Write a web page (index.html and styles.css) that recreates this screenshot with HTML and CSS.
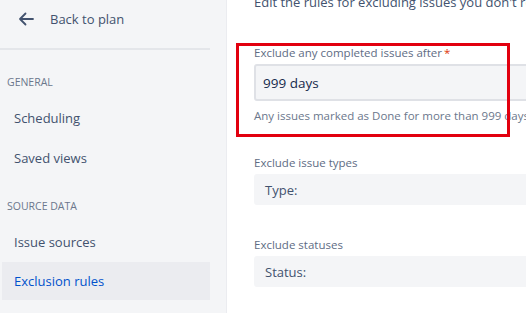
FILE: index.html
```html
<!DOCTYPE html>
<html>
<head>
<meta charset="utf-8">
<link rel="stylesheet" href="styles.css">
</head>
<body>
<div class="page">
  <aside class="sidebar">
    <div class="back">
      <svg class="back-icon" width="16" height="16" viewBox="0 0 16 16"><path d="M15 8H2M7.5 2.5L2 8l5.5 5.5" fill="none" stroke="#42526e" stroke-width="1.8" stroke-linecap="round" stroke-linejoin="round"/></svg>
      <span>Back to plan</span>
    </div>
    <div class="divider"></div>
    <div class="group-title">GENERAL</div>
    <div class="nav-item">Scheduling</div>
    <div class="nav-item">Saved views</div>
    <div class="group-title">SOURCE DATA</div>
    <div class="nav-item">Issue sources</div>
    <div class="nav-item selected">Exclusion rules</div>
  </aside>
  <main class="main">
    <p class="intro">Edit the rules for excluding issues you don't really want to include in your plan.</p>
    <div class="field first">
      <div class="label">Exclude any completed issues after<span class="req">*</span></div>
      <div class="input">999 days</div>
      <div class="help">Any issues marked as Done for more than 999 days will be excluded from your plan.</div>
    </div>
    <div class="field second">
      <div class="label">Exclude issue types</div>
      <div class="select">Type:</div>
    </div>
    <div class="field third">
      <div class="label">Exclude statuses</div>
      <div class="select">Status:</div>
    </div>
    <div class="highlight"></div>
  </main>
</div>
</body>
</html>
```
FILE: styles.css
```css
* { box-sizing: border-box; }
html, body { margin: 0; padding: 0; height: 100%; overflow: hidden; }
body {
  font-family: "Open Sans", "Noto Sans", sans-serif;
  background: #fff;
  color: #172b4d;
}
.page { display: flex; height: 313px; }
.sidebar {
  width: 227px;
  flex: none;
  background: #f4f5f7;
  border-right: 1px solid #ebecf0;
  padding-right: 16px;
}
.back {
  height: 38px;
  display: flex;
  align-items: center;
  padding-left: 18px;
  gap: 16px;
  font-size: 13px;
  color: #42526e;
}
.back-icon { display: block; }
.divider { height: 2px; background: #e4e6ea; margin-top: 10px; }
.group-title {
  font-size: 10.5px;
  line-height: 16px;
  height: 16px;
  color: #6b778c;
  padding-left: 7px;
  margin: 20px 0 8px;
}
.divider + .group-title { margin-top: 24px; }
.nav-item {
  height: 40px;
  display: flex;
  align-items: center;
  padding-left: 14px;
  font-size: 13px;
  color: #42526e;
}
.nav-item.selected {
  height: 38px;
  margin-left: 2px;
  padding-left: 12px;
  background: #ebecf0;
  color: #0052cc;
}
.main {
  flex: 1;
  position: relative;
  padding-left: 27px;
  min-width: 0;
}
.intro {
  margin: -8px 0 0;
  font-size: 13px;
  line-height: 20px;
  color: #42526e;
  white-space: nowrap;
}
.field.first { margin-top: 33px; }
.field.second { margin-top: 31px; }
.field.third { margin-top: 32px; }
.label {
  font-size: 11.5px;
  line-height: 16px;
  color: #5e6c84;
  white-space: nowrap;
}
.req { color: #de350b; margin-left: 2px; }
.input {
  margin-top: 3px;
  height: 37px;
  width: 400px;
  background: #f4f5f7;
  border: 2px solid #dfe1e6;
  border-radius: 3px;
  padding-left: 7px;
  display: flex;
  align-items: center;
  font-size: 13.5px;
  color: #172b4d;
}
.help {
  margin-top: 7px;
  font-size: 11.5px;
  line-height: 16px;
  color: #6b778c;
  white-space: nowrap;
}
.select {
  margin-top: 3px;
  height: 31px;
  width: 400px;
  background: #f4f5f7;
  border-radius: 3px;
  padding-left: 11px;
  display: flex;
  align-items: center;
  font-size: 13px;
  color: #42526e;
}
.highlight {
  position: absolute;
  left: 9px;
  top: 43px;
  width: 274px;
  height: 94px;
  border: 3px solid #e2000f;
}
```
